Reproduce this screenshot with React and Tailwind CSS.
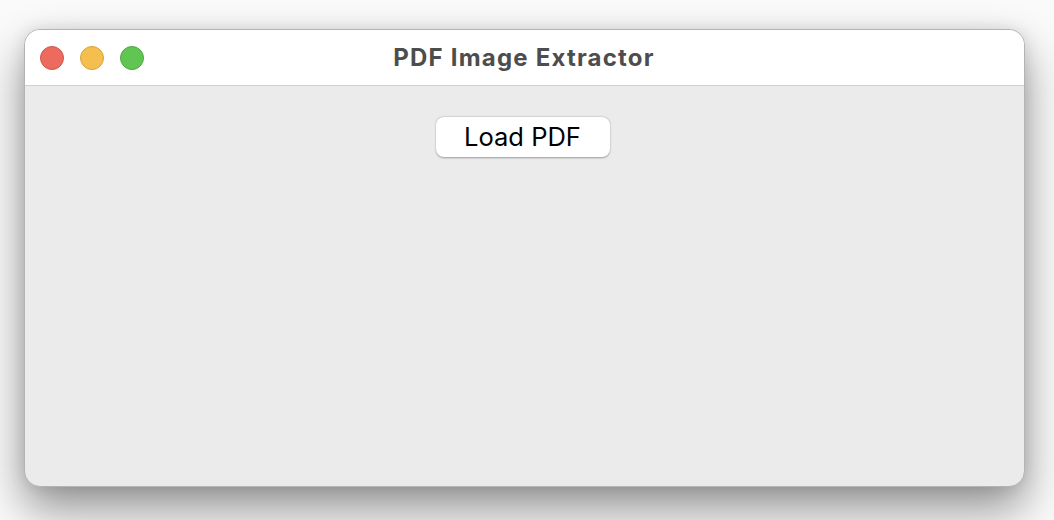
import React from 'react';

const App = () => {
  return (
    <div className="w-[1054px] h-[520px] bg-[#fafafa] overflow-hidden pt-[29px] pl-[24px]" style={{ fontFamily: 'Inter, "Liberation Sans", sans-serif' }}>
      <div className="w-[1001px] h-[458px] rounded-[16px] bg-[#ebebeb] border border-[#b4b4b4] shadow-[0_22px_45px_rgba(0,0,0,0.42),0_0_16px_rgba(0,0,0,0.1)] overflow-hidden flex flex-col">
        <div className="relative h-[56px] bg-white border-b border-[#d0d0d0] flex items-center justify-center shrink-0">
          <div className="absolute left-[15px] top-[16px] flex gap-[16px]">
            <span className="w-[24px] h-[24px] rounded-full bg-[#ed6a5e] border border-[#d25548]" />
            <span className="w-[24px] h-[24px] rounded-full bg-[#f5bf4f] border border-[#d7a23e]" />
            <span className="w-[24px] h-[24px] rounded-full bg-[#61c554] border border-[#4ea843]" />
          </div>
          <h1 className="text-[24px] font-bold text-[#4d4d4d] tracking-[1.2px] pr-[1px]">PDF Image Extractor</h1>
        </div>
        <div className="flex-1 flex justify-center pt-[31px] pr-[4px]">
          <button className="h-[40px] w-[174px] bg-white rounded-[8px] shadow-[0_0.5px_2px_rgba(0,0,0,0.35)] text-[25.5px] leading-none text-black">
            Load PDF
          </button>
        </div>
      </div>
    </div>
  );
};

export default App;
